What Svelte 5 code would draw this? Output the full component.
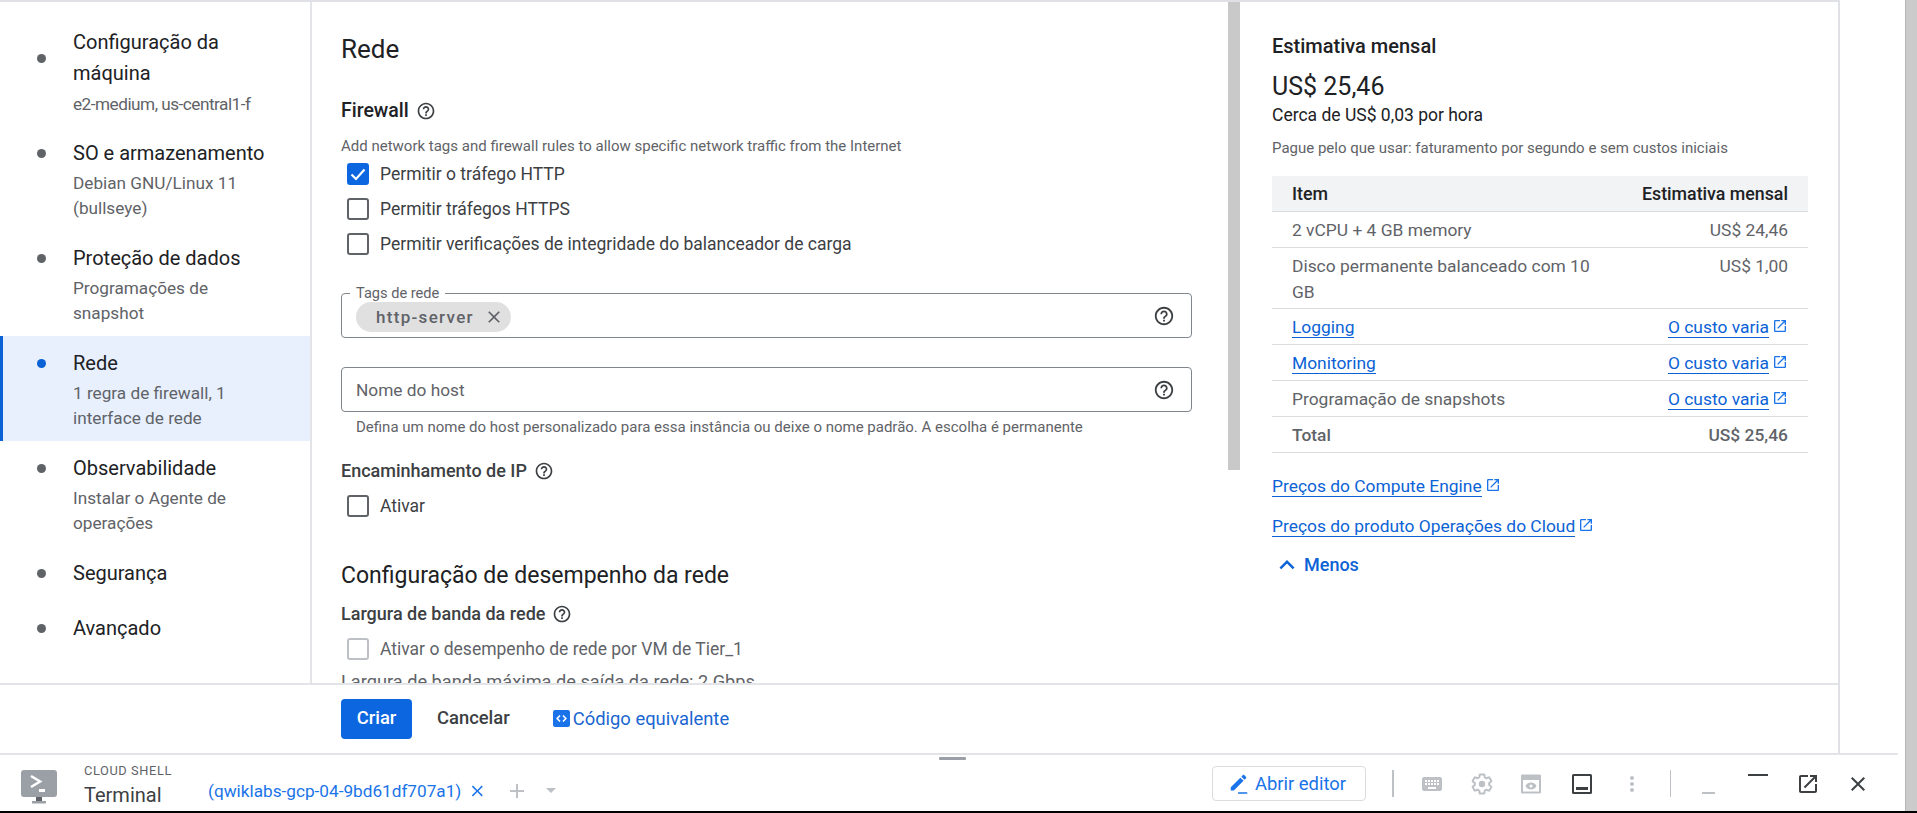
<script>
  const P = {
    help: 'M11 18h2v-2h-2v2zm1-16C6.48 2 2 6.48 2 12s4.48 10 10 10 10-4.48 10-10S17.52 2 12 2zm0 18c-4.41 0-8-3.59-8-8s3.59-8 8-8 8 3.59 8 8-3.59 8-8 8zm0-14c-2.21 0-4 1.79-4 4h2c0-1.1.9-2 2-2s2 .9 2 2c0 2-3 1.75-3 5h2c0-2.25 3-2.5 3-5 0-2.21-1.79-4-4-4z',
    open: 'M19 19H5V5h7V3H5c-1.11 0-2 .9-2 2v14c0 1.1.89 2 2 2h14c1.1 0 2-.9 2-2v-7h-2v7zM14 3v2h3.59l-9.83 9.83 1.41 1.41L19 6.41V10h2V3h-7z',
    close: 'M19 6.41L17.59 5 12 10.59 6.41 5 5 6.41 10.59 12 5 17.59 6.41 19 12 13.41 17.59 19 19 17.59 13.41 12z',
    up: 'M7.41 15.41L12 10.83l4.59 4.58L18 14l-6-6-6 6z',
    edit: 'M3 15.6V19h3.4L16.9 8.5l-3.4-3.4L3 15.6zM19.7 5.7c.4-.4.4-1 0-1.4l-2-2c-.4-.4-1-.4-1.4 0l-1.7 1.7 3.4 3.4 1.7-1.7zM11 21h10v1.6H11z',
    plus: 'M19 13h-6v6h-2v-6H5v-2h6V5h2v6h6v2z',
    dots: 'M12 8c1.1 0 2-.9 2-2s-.9-2-2-2-2 .9-2 2 .9 2 2 2zm0 2c-1.1 0-2 .9-2 2s.9 2 2 2 2-.9 2-2-.9-2-2-2zm0 6c-1.1 0-2 .9-2 2s.9 2 2 2 2-.9 2-2-.9-2-2-2z',
    keyboard: 'M20 5H4c-1.1 0-2 .9-2 2v10c0 1.1.9 2 2 2h16c1.1 0 2-.9 2-2V7c0-1.1-.9-2-2-2zm-9 3h2v2h-2V8zm0 3h2v2h-2v-2zM8 8h2v2H8V8zm0 3h2v2H8v-2zm-1 2H5v-2h2v2zm0-3H5V8h2v2zm9 7H8v-2h8v2zm0-4h-2v-2h2v2zm0-3h-2V8h2v2zm3 3h-2v-2h2v2zm0-3h-2V8h2v2z',
    gear: 'M19.14 12.94c.04-.3.06-.61.06-.94 0-.32-.02-.64-.07-.94l2.03-1.58c.18-.14.23-.41.12-.61l-1.92-3.32c-.12-.22-.37-.29-.59-.22l-2.39.96c-.5-.38-1.03-.7-1.62-.94l-.36-2.54c-.04-.24-.24-.41-.48-.41h-3.84c-.24 0-.43.17-.47.41l-.36 2.54c-.59.24-1.13.57-1.62.94l-2.39-.96c-.22-.08-.47 0-.59.22L2.74 8.87c-.12.21-.08.47.12.61l2.03 1.58c-.05.3-.09.63-.09.94s.02.64.07.94l-2.03 1.58c-.18.14-.23.41-.12.61l1.92 3.32c.12.22.37.29.59.22l2.39-.96c.5.38 1.03.7 1.62.94l.36 2.54c.05.24.24.41.48.41h3.84c.24 0 .44-.17.47-.41l.36-2.54c.59-.24 1.13-.56 1.62-.94l2.39.96c.22.08.47 0 .59-.22l1.92-3.32c.12-.22.07-.47-.12-.61l-2.01-1.58z'
  };
  const steps = [
    { t: ['Configuração da', 'máquina'], s: ['e2-medium, us-central1-f'], tight: true },
    { t: ['SO e armazenamento'], s: ['Debian GNU/Linux 11', '(bullseye)'] },
    { t: ['Proteção de dados'], s: ['Programações de', 'snapshot'] },
    { t: ['Rede'], s: ['1 regra de firewall, 1', 'interface de rede'], active: true },
    { t: ['Observabilidade'], s: ['Instalar o Agente de', 'operações'] },
    { t: ['Segurança'], s: [] },
    { t: ['Avançado'], s: [] }
  ];
  const rows = [
    ['2 vCPU + 4 GB memory', 'US$ 24,46'],
    ['Disco permanente balanceado com 10 GB', 'US$ 1,00']
  ];
</script>

{#snippet icon(d, cls)}
  <svg class={cls} viewBox="0 0 24 24" aria-hidden="true"><path {d} /></svg>
{/snippet}

{#snippet check(label, state)}
  <label class="check {state}">
    <span class="box">
      {#if state === 'on'}
        <svg viewBox="0 0 22 22"><path d="M4.5 11.5l4.5 4.5 8.5-9.5" /></svg>
      {/if}
    </span>
    {label}
  </label>
{/snippet}

<div class="page">
  <div class="col">
    <div class="console">
      <div class="work">
        <nav class="steps">
          {#each steps as step}
            <div class="step" class:active={step.active}>
              <div class="title"><span class="dot"></span>{#each step.t as l}<div>{l}</div>{/each}</div>
              {#each step.s as l}<div class="sub" class:tight={step.tight}>{l}</div>{/each}
            </div>
          {/each}
        </nav>

        <main class="main">
          <div class="form">
            <h1>Rede</h1>
            <h2 class="fw">Firewall {@render icon(P.help, 'help')}</h2>
            <p class="desc">Add network tags and firewall rules to allow specific network traffic from the Internet</p>
            <div class="checks">
              {@render check('Permitir o tráfego HTTP', 'on')}
              {@render check('Permitir tráfegos HTTPS', '')}
              {@render check('Permitir verificações de integridade do balanceador de carga', '')}
            </div>
            <div class="field tags">
              <span class="legend">Tags de rede</span>
              <span class="chip">http-server {@render icon(P.close, 'chipx')}</span>
              {@render icon(P.help, 'fhelp')}
            </div>
            <div class="field host">
              <span class="ph">Nome do host</span>
              {@render icon(P.help, 'fhelp')}
            </div>
            <p class="hint">Defina um nome do host personalizado para essa instância ou deixe o nome padrão. A escolha é permanente</p>
            <h2 class="ip">Encaminhamento de IP {@render icon(P.help, 'help')}</h2>
            <div class="one">{@render check('Ativar', '')}</div>
            <h3>Configuração de desempenho da rede</h3>
            <h2 class="band">Largura de banda da rede {@render icon(P.help, 'help')}</h2>
            <div class="one dis">{@render check('Ativar o desempenho de rede por VM de Tier_1', 'off')}</div>
            <p class="max">Largura de banda máxima de saída da rede: 2 Gbps</p>
          </div>
          <div class="thumb"></div>
        </main>

        <aside class="cost">
          <h4>Estimativa mensal</h4>
          <div class="price">US$ 25,46</div>
          <div class="hour">Cerca de US$ 0,03 por hora</div>
          <p class="pay">Pague pelo que usar: faturamento por segundo e sem custos iniciais</p>
          <table>
            <thead><tr><th class="c1">Item</th><th class="r">Estimativa mensal</th></tr></thead>
            <tbody>
              {#each rows as r}
                <tr><td>{r[0]}</td><td class="r">{r[1]}</td></tr>
              {/each}
              <tr><td><a href="#l">Logging</a></td><td class="r"><a href="#l">O custo varia</a>{@render icon(P.open, 'ext')}</td></tr>
              <tr><td><a href="#m">Monitoring</a></td><td class="r"><a href="#m">O custo varia</a>{@render icon(P.open, 'ext')}</td></tr>
              <tr><td>Programação de snapshots</td><td class="r"><a href="#s">O custo varia</a>{@render icon(P.open, 'ext')}</td></tr>
              <tr class="total"><td>Total</td><td class="r">US$ 25,46</td></tr>
            </tbody>
          </table>
          <div class="plink first"><a href="#c">Preços do Compute Engine</a>{@render icon(P.open, 'ext')}</div>
          <div class="plink"><a href="#o">Preços do produto Operações do Cloud</a>{@render icon(P.open, 'ext')}</div>
          <div class="less">{@render icon(P.up, 'chev')} Menos</div>
        </aside>
      </div>
      <footer class="foot">
        <button class="create">Criar</button>
        <button class="cancel">Cancelar</button>
        <span class="code">
          <svg viewBox="0 0 16 16"><rect width="16" height="16" rx="2" fill="#1a73e8" /><path d="M6.6 5.2L3.9 8l2.7 2.8M9.4 5.2L12.1 8l-2.7 2.8" fill="none" stroke="#fff" stroke-width="1.5" /></svg>
          Código equivalente
        </span>
      </footer>
    </div>

    <section class="shell">
      <span class="handle"></span>
      <svg class="term" viewBox="0 0 38 36">
        <rect x="1" y="1" width="36" height="27" rx="3" fill="#9aa0a6" />
        <path d="M11 7l9 5.5-9 5.5" fill="none" stroke="#fff" stroke-width="2.6" />
        <rect x="19" y="20" width="6" height="3" fill="#fff" />
        <rect x="16" y="28" width="6" height="4" fill="#5f6368" />
        <rect x="12" y="32" width="14" height="2.5" fill="#9aa0a6" />
      </svg>
      <div class="names">
        <div class="cs">CLOUD SHELL</div>
        <div class="tm">Terminal</div>
      </div>
      <div class="tab">(qwiklabs-gcp-04-9bd61df707a1){@render icon(P.close, 'tabx')}</div>
      {@render icon(P.plus, 'plus')}
      <span class="caret"></span>
      <span class="grow"></span>
      <button class="editor">{@render icon(P.edit, 'pen')}Abrir editor</button>
      <span class="sep"></span>
      {@render icon(P.keyboard, 'tool kb')}
      <svg class="tool gear" viewBox="0 0 24 24"><path d={P.gear} /><circle cx="12" cy="12" r="3.2" /></svg>
      <svg class="tool prev" viewBox="0 0 24 24"><path d="M3 2.5h18a1 1 0 0 1 1 1v17a1 1 0 0 1-1 1H3a1 1 0 0 1-1-1v-17a1 1 0 0 1 1-1zM4 8v11.5h16V8z" /><path d="M12 10.5c2.6 0 4.6 1.5 5.5 3.5-.9 2-2.900 3.500-5.500 3.500S7.400 16 6.500 14c.9-2 2.900-3.500 5.500-3.500zm0 2a1.500 1.500 0 1 0 0 3 1.500 1.500 0 0 0 0-3z" /></svg>
      <svg class="tool panel" viewBox="0 0 24 24"><path d="M3.500 2h17A1.500 1.500 0 0 1 22 3.500v17a1.500 1.500 0 0 1-1.500 1.500h-17A1.500 1.500 0 0 1 2 20.500v-17A1.500 1.500 0 0 1 3.500 2zM4 4v16h16V4zM6 15h12v3H6z" /></svg>
      {@render icon(P.dots, 'tool dots')}
      <span class="sep two"></span>
      <span class="min"></span>
      <span class="max-bar"></span>
      {@render icon(P.open, 'tool pop')}
      {@render icon(P.close, 'tool x')}
    </section>
  </div>
  <div class="pagebar"></div>
</div>

<style>
  :global(body) { margin: 0; background: #fff; }
  * { box-sizing: border-box; }
  .page { display: flex; width: 1917px; height: 813px; overflow: hidden; font-family: Roboto, sans-serif; color: #202124; border-bottom: 2px solid #000; background: #fff; }
  .col { width: 1905px; display: flex; flex-direction: column; }
  .pagebar { width: 12px; background: #cbcbcb; border-left: 1px solid #b4b4b4; }
  .console { width: 1840px; height: 753px; flex: none; border-top: 2px solid #dfe1e7; border-right: 2px solid #dfe1e7; display: flex; flex-direction: column; }
  .work { flex: 1; min-height: 0; display: flex; overflow: hidden; }

  .steps { width: 312px; flex: none; padding-top: 13px; border-right: 2px solid #e3e4e8; }
  .step { padding: 12px 10px 10.5px 73px; }
  .step:first-child { padding-bottom: 9.5px; }
  .step.active { background: #e8f0fe; border-left: 3px solid #0b62d6; padding-left: 70px; }
  .title { position: relative; font-size: 20px; line-height: 31px; color: #202124; }
  .title:last-child { margin-bottom: 1.5px; }
  .title + .sub { margin-top: 2.5px; }
  .dot { position: absolute; left: -36px; top: calc(50% - 4.5px); width: 9px; height: 9px; border-radius: 50%; background: #5f6368; }
  .active .dot { left: -36px; background: #0b62d6; }
  .sub { font-size: 17.2px; line-height: 24.5px; color: #5f6368; white-space: nowrap; }
  .sub.tight { letter-spacing: -.5px; }

  .main { width: 928px; flex: none; display: flex; align-items: flex-start; }
  .form { width: 916px; flex: none; padding-left: 29px; }
  .thumb { width: 12px; height: 468px; background: #c9c9c9; flex: none; }
  h1 { margin: 29px 0 0; font-size: 26px; font-weight: 400; line-height: 36px; }
  h2 { margin: 0; font-size: 18px; font-weight: 500; line-height: 24px; display: flex; align-items: center; gap: 7px; color: #3c4043; }
  .help { width: 20px; height: 20px; fill: #3c4043; }
  .fw { margin-top: 32px; font-size: 19.5px; color: #202124; }
  .desc { margin: 13px 0 0; font-size: 15px; line-height: 20px; color: #5f6368; white-space: nowrap; }
  .checks { margin-top: 0; display: flex; flex-direction: column; }
  .check { display: flex; align-items: center; height: 35px; padding-left: 6px; font-size: 17.5px; color: #3c4043; }
  .box { width: 22px; height: 22px; flex: none; margin-right: 11px; border: 2px solid #5f6368; border-radius: 3px; background: #fff; }
  .on .box { background: #0b66e0; border-color: #0b66e0; display: block; position: relative; }
  .on .box svg { position: absolute; left: -2px; top: -2px; width: 22px; height: 22px; fill: none; stroke: #fff; stroke-width: 2.2px; }
  .off .box { border-color: #bdc1c6; }
  .off { color: #5f6368; }

  .field { position: relative; width: 851px; height: 45px; border: 1.5px solid #80868b; border-radius: 4px; display: flex; align-items: center; padding-left: 14px; }
  .tags { margin-top: 32px; }
  .host { margin-top: 29px; }
  .legend { position: absolute; left: 8px; top: -9px; padding: 0 6px; background: #fff; font-size: 14.6px; line-height: 16px; color: #5f6368; }
  .chip { height: 30px; width: 155px; border-radius: 15px; background: #e0e0e0; display: flex; align-items: center; padding-left: 20px; font-size: 17px; font-weight: 500; letter-spacing: 1.3px; color: #5f6368; position: relative; top: 1px; }
  .chipx { position: absolute; right: 7px; top: 5px; width: 20px; height: 20px; fill: #5f6368; }
  .fhelp { position: absolute; right: 16px; top: 11px; width: 22px; height: 22px; fill: #3c4043; }
  .ph { font-size: 17.3px; color: #5f6368; }
  .hint { margin: 6px 0 0 15px; font-size: 15px; line-height: 18px; color: #5f6368; white-space: nowrap; }
  .ip { margin-top: 23px; }
  .one { margin-top: 5px; }
  h3 { margin: 37px 0 0; font-size: 23px; line-height: 32px; font-weight: 400; }
  .band { margin-top: 10px; }
  .dis { margin-top: 5px; }
  .max { margin: 5px 0 0; font-size: 18.2px; line-height: 22px; color: #5f6368; white-space: nowrap; }

  .cost { flex: 1; padding: 32px 30px 0 32px; }
  h4 { margin: 0; font-size: 20px; font-weight: 500; line-height: 24px; }
  .price { margin-top: 13px; font-size: 25px; line-height: 32px; }
  .hour { font-size: 17.5px; line-height: 24px; }
  .pay { margin: 11px 0 0; font-size: 15px; line-height: 20px; color: #5f6368; white-space: nowrap; }
  table { margin-top: 18px; width: 536px; border-collapse: collapse; font-size: 17.4px; color: #5f6368; }
  th { height: 35px; background: #f1f3f4; font-weight: 500; font-size: 17.8px; color: #202124; text-align: left; padding: 0 20px; border-bottom: 1.5px solid #dadce0; }
  th.c1 { width: 345px; }
  td { height: 36px; padding: 5px 20px 3px; line-height: 26px; border-bottom: 1.5px solid #dadce0; vertical-align: top; }
  th.r, td.r { text-align: right; white-space: nowrap; }
  .total td { font-weight: 500; }
  a { color: #0b62d6; text-decoration: none; border-bottom: 1px solid #0b62d6; line-height: 20px; display: inline-block; }
  .ext { width: 16px; height: 16px; fill: #1a73e8; vertical-align: -1px; margin-left: 3px; }
  .plink { margin-top: 17px; font-size: 17.4px; height: 23px; }
  .plink.first { margin-top: 23px; }
  .less { margin-top: 11px; display: flex; align-items: center; padding-left: 0; font-size: 18px; color: #0b62d6; font-weight: 500; }
  .chev { width: 34px; height: 30px; fill: #0b62d6; margin-left: -2px; }

  .foot { height: 70px; flex: none; border-top: 2px solid #e3e4e8; display: flex; align-items: center; padding-left: 341px; font-size: 18.4px; }
  button { font: inherit; border: 0; background: none; padding: 0; }
  .create { width: 71px; height: 40px; background: #0b66e0; border-radius: 4px; color: #fff; font-weight: 500; padding-bottom: 3px; }
  .cancel { margin-left: 25px; font-weight: 500; color: #3c4043; padding-bottom: 3px; }
  .code { margin-left: 43px; display: flex; align-items: center; gap: 3px; color: #1a66d0; padding-bottom: 1px; }
  .code svg { width: 17px; height: 17px; }

  .shell { position: relative; flex: 1; width: 1898px; border-top: 2px solid #e3e4e8; display: flex; align-items: center; padding: 0 28px 0 20px; }
  .handle { position: absolute; left: 939px; top: 2px; width: 27px; height: 3px; background: #9aa0a6; border-radius: 1px; }
  .term { width: 38px; height: 36px; flex: none; margin-top: 6px; }
  .names { margin-left: 26px; width: 124px; flex: none; }
  .cs { font-size: 12.8px; letter-spacing: .6px; line-height: 16px; color: #5f6368; margin-top: 4px; }
  .tm { font-size: 20px; line-height: 28px; margin-top: 2px; color: #3c4043; }
  .tab { height: 57px; width: 279px; flex: none; display: flex; align-items: center; padding-top: 16px; font-size: 17.2px; color: #1a73e8; border-bottom: 1px solid #1a73e8; white-space: nowrap; }
  .tabx { width: 20px; height: 20px; fill: #1a73e8; margin-left: 7px; }
  .plus { width: 24px; height: 24px; fill: #bdc1c6; margin: 15px 0 0 18px; flex: none; }
  .caret { width: 0; height: 0; border: 5px solid transparent; border-top: 5px solid #bdc1c6; margin: 18px 0 0 17px; }
  .grow { flex: 1; }
  .editor { width: 154px; height: 35px; border: 1px solid #dadce0; border-radius: 4px; display: flex; align-items: center; padding-left: 15px; font-size: 18.4px; color: #1a73e8; flex: none; }
  .pen { width: 22px; height: 22px; fill: #1a73e8; margin-right: 5px; }
  .sep { width: 1.5px; height: 27px; background: #bdc1c6; margin-left: 26px; flex: none; }
  .tool { width: 24px; height: 24px; flex: none; fill: #bdc1c6; }
  .kb { margin-left: 26px; }
  .gear { margin-left: 26px; fill: #fff; stroke: #bdc1c6; stroke-width: 2; }
  .gear circle { fill: #bdc1c6; stroke: none; }
  .prev { margin-left: 25px; }
  .panel { margin-left: 27px; fill: #3c4043; }
  .dots { margin-left: 26px; }
  .sep.two { margin-left: 26px; }
  .min { width: 13px; height: 2px; background: #bdc1c6; margin: 18px 0 0 31px; flex: none; }
  .max-bar { width: 20px; height: 2px; background: #3c4043; margin: -17px 0 0 33px; flex: none; }
  .pop { margin-left: 28px; fill: #3c4043; }
  .x { margin-left: 26px; fill: #3c4043; }
</style>
